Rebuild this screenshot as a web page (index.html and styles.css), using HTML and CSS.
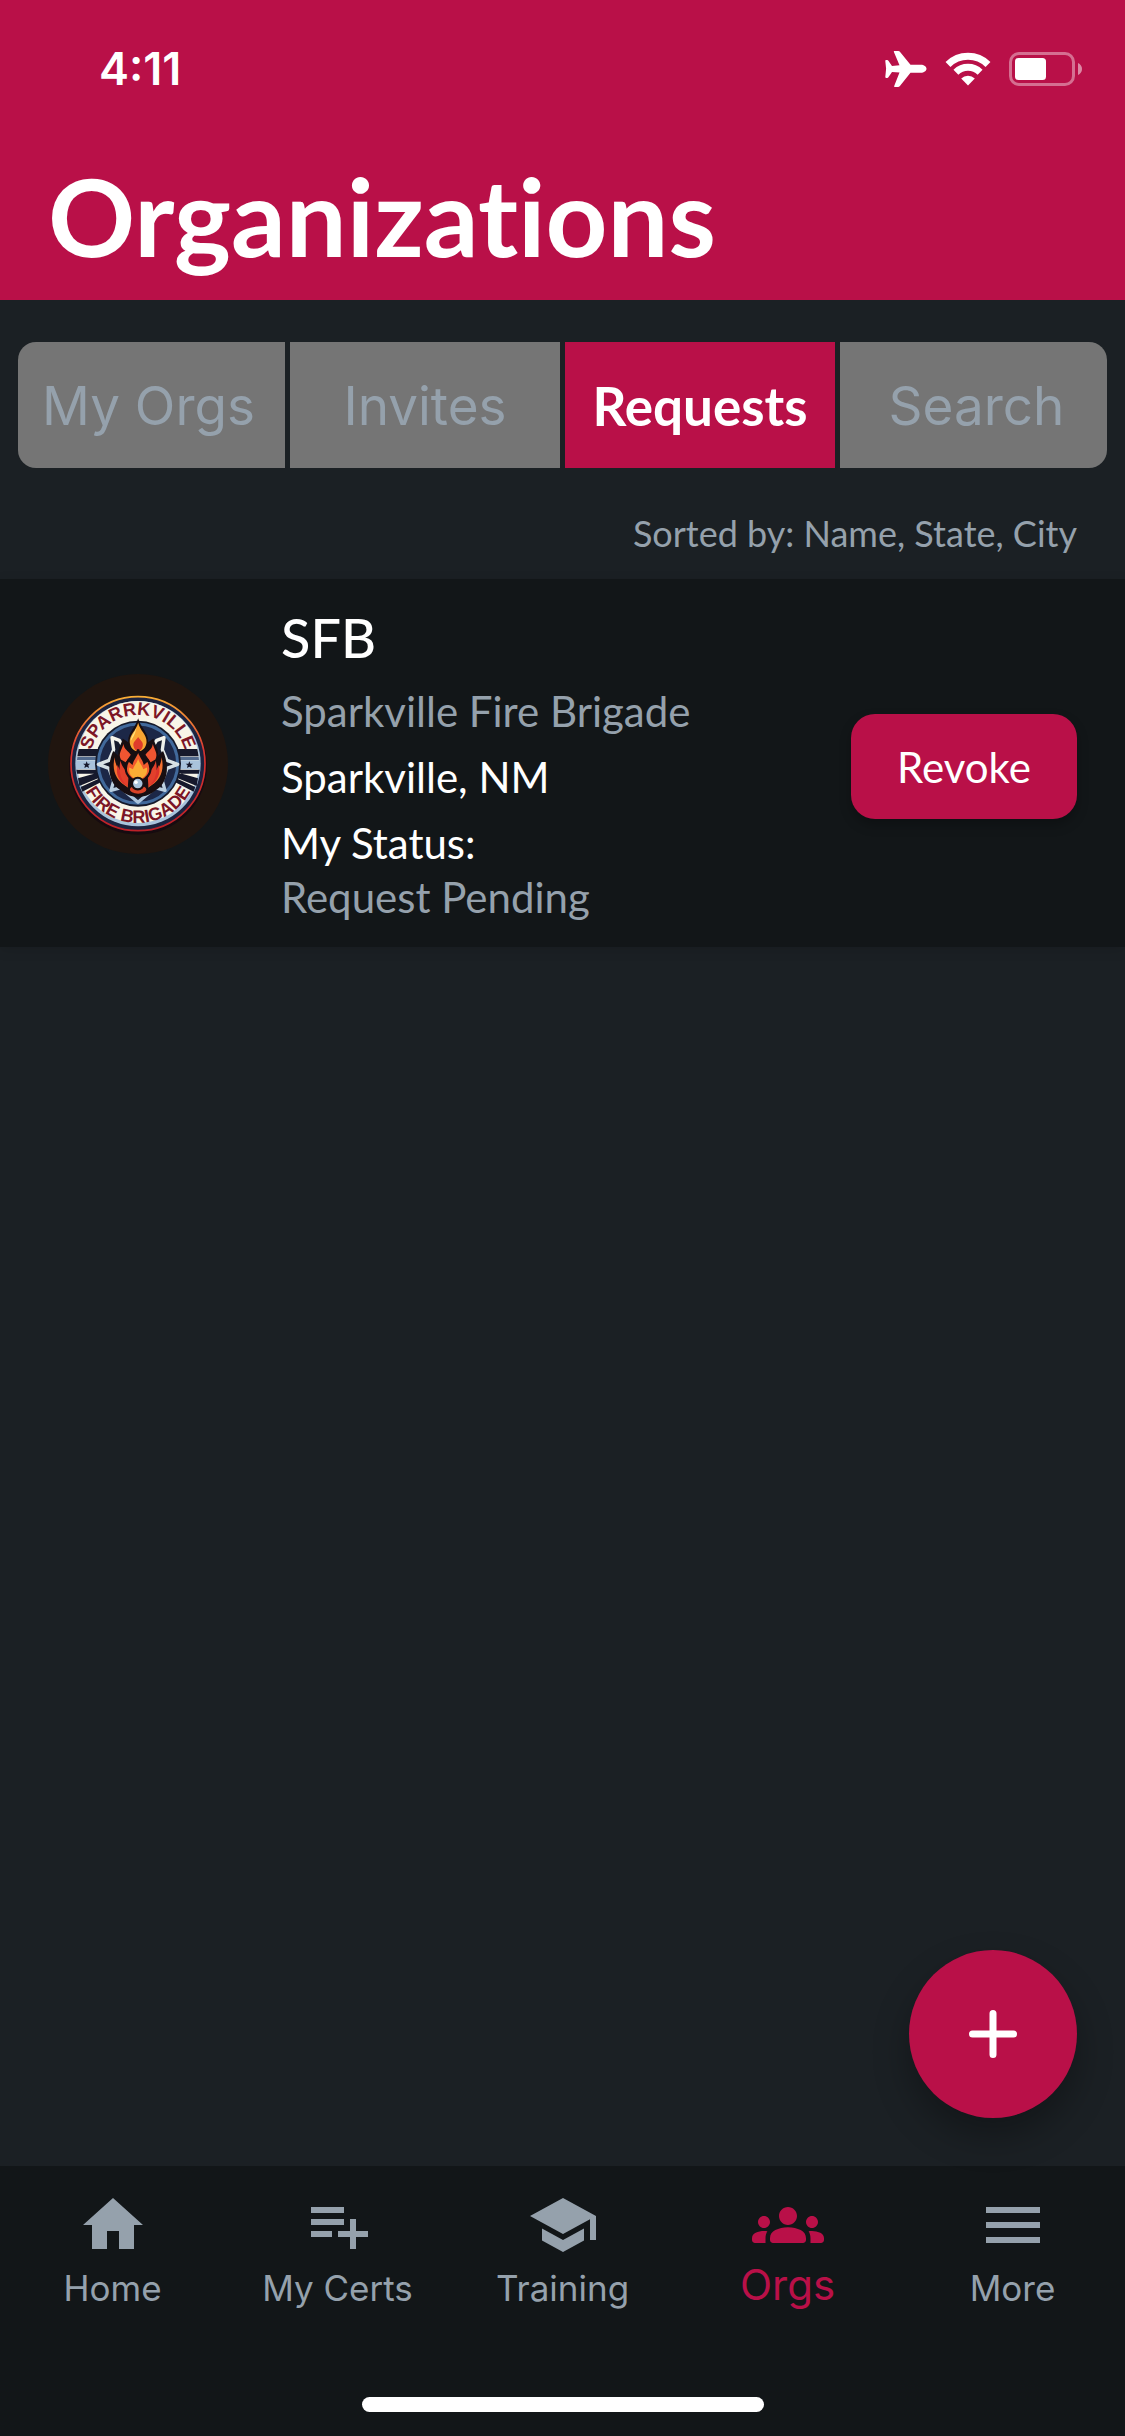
FILE: index.html
```html
<!DOCTYPE html>
<html lang="en">
<head>
<meta charset="utf-8">
<meta name="viewport" content="width=device-width, initial-scale=1">
<title>Organizations</title>
<link rel="stylesheet" href="styles.css">
</head>
<body>
<div class="app">
  <header class="header">
    <div class="status">
      <span class="status-time">4:11</span>
      <div class="status-icons">
        <svg width="42" height="38" viewBox="0 0 42 38" fill="#fff" aria-hidden="true"><path d="M9.500 1h3.800c.8 0 1.300.4 1.800 1.100L25.500 14.800h10.300c3.200 0 5.700 1.800 5.700 4s-2.500 4-5.700 4H25.500L15.100 35.800c-.5.700-1 1.200-1.800 1.200H9.800c-.5 0-.8-.5-.6-1l5.300-13.400-7.500-.7-3.600 5.300c-.3.500-.7.700-1.200.7H1c-.5 0-.7-.3-.7-.8l.8-8.300-.8-7.900c0-.5.200-.8.700-.8h1.200c.5 0 .9.200 1.200.7l3.600 5.200 7.500-.7L8.900 2c-.2-.500 0-1 .6-1z"/></svg>
        <svg width="46" height="34" viewBox="0 0 46 34" fill="none" stroke="#fff" stroke-width="7" aria-hidden="true"><path d="M3 12.500a28.500 28.500 0 0 1 40 0"/><path d="M10.900 20.300a17.300 17.300 0 0 1 24.200 0"/><path d="M23 33.500l-6.800-7a9.600 9.600 0 0 1 13.600 0z" fill="#fff" stroke="none"/></svg>
        <svg width="74" height="34" viewBox="0 0 74 34" aria-hidden="true"><rect x="1.500" y="1.500" width="63" height="31" rx="8.500" fill="none" stroke="#fff" stroke-opacity=".4" stroke-width="3"/><rect x="6" y="6" width="31" height="22" rx="3.500" fill="#fff"/><path d="M69 11c2.500 1 4 3.400 4 6s-1.500 5-4 6z" fill="#fff" fill-opacity=".5"/></svg>
      </div>
    </div>
    <h1 class="title">Organizations</h1>
  </header>

  <main class="content">
    <div class="tabs-wrap">
      <div class="tabs" role="tablist">
        <button class="tab" type="button" role="tab" aria-selected="false">My Orgs</button>
        <button class="tab" type="button" role="tab" aria-selected="false">Invites</button>
        <button class="tab tab-active" type="button" role="tab" aria-selected="true">Requests</button>
        <button class="tab" type="button" role="tab" aria-selected="false">Search</button>
      </div>
    </div>
    <p class="sort-note">Sorted by: Name, State, City</p>

    <article class="card">
      <svg class="avatar" viewBox="54 39 540 540" role="img" aria-label="Sparkville Fire Brigade logo">
        <defs>
          <linearGradient id="rim" x1="0" y1="0" x2="0" y2="1"><stop offset="0" stop-color="#f9ad35"/><stop offset=".18" stop-color="#ee7d35"/><stop offset=".4" stop-color="#d93531"/><stop offset="1" stop-color="#bd2028"/></linearGradient>
          <linearGradient id="steel" x1="0" y1="0" x2="0" y2="1"><stop offset="0" stop-color="#f6f5ec"/><stop offset="1" stop-color="#a9c3dc"/></linearGradient>
          <path id="arc-top" d="M178 308a146 146 0 0 1 292 0"/>
          <path id="arc-bottom" d="M146 308a178 178 0 0 0 356 0"/>
        </defs>
        <circle cx="324" cy="309" r="270" fill="#20150f"/>
        <circle cx="324" cy="314" r="207" fill="#160b10"/>
        <circle cx="324" cy="308" r="201" fill="#1c2340" stroke="url(#rim)" stroke-width="5"/>
        <circle cx="324" cy="308" r="188" fill="#a9c3dc"/>
        <circle cx="324" cy="303" r="183" fill="#f8f5e8"/>
        <g fill="#16192c">
          <path d="M146 264h62v22h-66zM440 264h62l4 22h-66zM139 326h66v12h-64zM443 326h66l-2 12h-64zM144 352l64-18v16l-60 25zM504 352l-64-18v16l60 25zM152 378l66-30v13l-61 31zM496 378l-66-30v13l61 31z"/>
        </g>
        <g fill="#a9c3dc"><path d="M140 298h64v27h-65zM444 298h64l1 27h-65z"/></g>
        <g fill="#526a8e"><path d="M142 287h62v10h-63zM444 287h62l1 10h-63z"/></g>
        <g fill="#16192c"><path d="M170 301l3 7h8l-6 5 2 8-7-4-7 4 2-8-6-5h8zM478 301l3 7h8l-6 5 2 8-7-4-7 4 2-8-6-5h8z"/></g>
        <circle cx="324" cy="308" r="129" fill="#15192a"/>
        <circle cx="324" cy="308" r="119" fill="#1c2747" stroke="#41699b" stroke-width="9"/>
        <path d="M246 230l22 8 14 22 84 0 14-22 22-8-5 36 14 32 32 12-32 12-14 38 8 28-30-8-18 16-33 28-33-28-18-16-30 8 8-28-14-38-32-12 32-12 14-32z" fill="#151a2c" stroke="url(#steel)" stroke-width="10" stroke-linejoin="round"/>
        <g transform="translate(-32 -26) scale(1.1)">
        <path d="M324 180c7 27 29 39 27 65l15-10c4 18 14 25 12 48l14-14c20 46 10 87-17 105-15 12-29 20-51 20s-36-8-51-20c-27-18-37-59-17-105l14 14c-2-23 8-30 12-48l15 10c-2-26 20-38 27-65z" fill="#180e11"/>
        <path d="M324 192c5 22 24 32 23 53-1 14-11 25-23 25s-22-11-23-25c-1-21 18-31 23-53z" fill="#f9a532"/>
        <path d="M324 231c6 10 16 13 12 27-2 7-7 11-12 11s-10-4-12-11c-4-14 6-17 12-27z" fill="#df3c2b"/>
        <path d="M320 202c-5 18-16 25-16 40 4-10 11-13 16-40z" fill="#ffe57d"/>
        <path d="M284 250c-5 18-15 26-7 42l13 8 14-21c-8-11-18-14-20-29zM364 250c5 18 15 26 7 42l-13 8-14-21c8-11 18-14 20-29z" fill="#ef5531"/>
        <path d="M260 286c-8 35 1 63 37 83-6-14-8-20-10-27-10-17-25-27-27-56zM388 286c8 35-1 63-37 83 6-14 8-20 10-27 10-17 25-27 27-56z" fill="#f4702f"/>
        <path d="M268 307c7 19 19 27 26 59-22-14-33-34-26-59zM380 307c-7 19-19 27-26 59 22-14 33-34 26-59z" fill="#dc322a"/>
        <path d="M276 296c4 18 14 24 22 40l-2 30c-16-14-28-38-20-70zM372 296c-4 18-14 24-22 40l2 30c16-14 28-38 20-70z" fill="#e2402b"/>
        <path d="M324 265c5 21 13 22 17 37l9-8c16 26 6 49-26 60-32-11-42-34-26-60l9 8c4-15 12-16 17-37z" fill="#f15a2d" stroke="#180e11" stroke-width="6"/>
        <path d="M324 290c5 16 12 19 14 29l10-5c3 22-9 29-24 34-15-5-27-12-24-34l10 5c2-10 9-13 14-29z" fill="#fbad35"/>
        <ellipse cx="324" cy="374" rx="25" ry="14" fill="#d94227" stroke="#180e11" stroke-width="5"/>
        <circle cx="323" cy="358" r="16" fill="#a9c3dc" stroke="#180e11" stroke-width="6"/>
        <circle cx="318" cy="354" r="5" fill="#fff"/>
        </g>
        <text class="seal-text"><textPath href="#arc-top" startOffset="50%">SPARRKVILLE</textPath></text>
        <text class="seal-text"><textPath href="#arc-bottom" startOffset="50%">FIRE BRIGADE</textPath></text>
      </svg>
      <div class="card-body">
        <h2 class="org-short">SFB</h2>
        <p class="line muted">Sparkville Fire Brigade</p>
        <p class="line">Sparkville, NM</p>
        <p class="status-line">My Status:<br><span class="muted">Request Pending</span></p>
      </div>
      <button class="revoke" type="button">Revoke</button>
    </article>

    <button class="fab" type="button" aria-label="Add organization">
      <svg width="48" height="48" viewBox="0 0 48 48" fill="none" stroke="#fff" stroke-width="7" stroke-linecap="round" aria-hidden="true"><path d="M24 3.500v41M3.500 24h41"/></svg>
    </button>
  </main>

  <footer class="footer">
    <nav class="nav">
      <a class="nav-item" href="#home"><svg class="nav-icon" viewBox="0 0 24 24" aria-hidden="true"><path d="M10 20v-6h4v6h5v-8h3L12 3 2 12h3v8z"/></svg><span class="nav-label">Home</span></a>
      <a class="nav-item" href="#certs"><svg class="nav-icon" viewBox="0 0 24 24" aria-hidden="true"><path d="M14 10H3v2h11v-2zm0-4H3v2h11V6zm4 8v-4h-2v4h-4v2h4v4h2v-4h4v-2h-4zM3 16h7v-2H3v2z"/></svg><span class="nav-label">My Certs</span></a>
      <a class="nav-item" href="#training"><svg class="nav-icon" viewBox="0 0 24 24" aria-hidden="true"><path d="M5 13.180v4L12 21l7-3.820v-4L12 17l-7-3.820zM12 3L1 9l11 6 9-4.910V17h2V9L12 3z"/></svg><span class="nav-label">Training</span></a>
      <a class="nav-item nav-active" href="#orgs" aria-current="page"><svg class="nav-icon" viewBox="0 0 24 24" aria-hidden="true"><path d="M12 12.750c1.630 0 3.070.39 4.240.9 1.080.48 1.760 1.560 1.760 2.730V17c0 .55-.45 1-1 1H7c-.55 0-1-.45-1-1v-.61c0-1.180.68-2.260 1.760-2.730 1.170-.52 2.610-.91 4.240-.91zM4 13c1.100 0 2-.9 2-2s-.9-2-2-2-2 .9-2 2 .9 2 2 2zm1.130 1.100C4.760 14.040 4.390 14 4 14c-.99 0-1.930.21-2.780.58A2.010 2.010 0 0 0 0 16.430V17c0 .55.45 1 1 1h3.500v-1.610c0-.83.23-1.610.63-2.290zM20 13c1.100 0 2-.9 2-2s-.9-2-2-2-2 .9-2 2 .9 2 2 2zm4 3.430c0-.81-.48-1.530-1.220-1.850A6.950 6.950 0 0 0 20 14c-.39 0-.76.04-1.130.1.4.68.63 1.460.63 2.290V18H23c.55 0 1-.45 1-1v-.57zM12 6c1.660 0 3 1.340 3 3s-1.340 3-3 3-3-1.340-3-3 1.340-3 3-3z"/></svg><span class="nav-label">Orgs</span></a>
      <a class="nav-item" href="#more"><svg class="nav-icon" viewBox="0 0 24 24" aria-hidden="true"><path d="M3 18h18v-2H3v2zm0-5h18v-2H3v2zm0-7v2h18V6H3z"/></svg><span class="nav-label">More</span></a>
    </nav>
    <div class="home-bar"></div>
  </footer>
</div>
</body>
</html>
```
FILE: styles.css
```css
:root {
  --brand: #b91048;
  --page: #1b2024;
  --panel: #121618;
  --muted: #95a1ac;
  --display: Lato, "Open Sans", sans-serif;
  --system: Inter, "Liberation Sans", sans-serif;
}

* { box-sizing: border-box; }

body {
  margin: 0;
  background: var(--page);
  color: #fff;
  font-family: var(--display);
  font-variant-ligatures: none;
}

h1, h2, p { margin: 0; }

button {
  border: 0;
  padding: 0;
  color: #fff;
  font-family: inherit;
}

.app {
  display: flex;
  flex-direction: column;
  min-height: 100vh;
}

.header {
  background: var(--brand);
  padding-bottom: 8px;
}

.status {
  display: flex;
  justify-content: space-between;
  align-items: center;
  height: 138px;
  padding: 0 42px 0 99px;
}

.status-time {
  font: 600 45px/54px var(--system);
}

.status-icons {
  display: flex;
  align-items: center;
  gap: 18px;
}

.title {
  padding: 0 48px;
  font-size: 108px;
  font-weight: 700;
  line-height: 154px;
}

.content {
  position: relative;
  flex: 1;
}

.tabs-wrap {
  padding: 36px 12px 0;
}

.tabs {
  display: grid;
  grid-template-columns: 267fr 270fr 270fr 267fr;
  gap: 5px;
  padding: 6px;
}

.tab {
  height: 126px;
  padding-top: 2px;
  background: #757575;
  color: var(--muted);
  font: 400 53px/64px var(--system);
}

.tab:first-child {
  padding-right: 6px;
  border-radius: 18px 0 0 18px;
}

.tab:last-child {
  padding-left: 6px;
  border-radius: 0 18px 18px 0;
}

.tab-active {
  background: var(--brand);
  color: #fff;
  font: 700 53px/64px var(--display);
}

.sort-note {
  padding: 36px 48px 23px;
  color: var(--muted);
  font-size: 36px;
  line-height: 46px;
  text-align: right;
}

.card {
  display: flex;
  align-items: center;
  padding: 25px 48px 23px;
  background: var(--panel);
  box-shadow: 0 3px 12px rgba(0, 0, 0, .12);
}

.avatar {
  flex: none;
  width: 180px;
  height: 180px;
}

.seal-text {
  fill: #7c1626;
  font: 700 54px "Liberation Sans", sans-serif;
  text-anchor: middle;
}

.card-body {
  flex: 1;
  padding-left: 53px;
}

.org-short {
  margin-bottom: 12px;
  font-family: "Lato Medium", Lato, sans-serif;
  font-size: 54px;
  font-weight: 500;
  line-height: 68px;
}

.line {
  margin-bottom: 12px;
  font-size: 42px;
  line-height: 54px;
}

.status-line {
  font-size: 42px;
  line-height: 54px;
}

.muted { color: var(--muted); }

.revoke {
  width: 226px;
  height: 105px;
  margin-top: 5px;
  border-radius: 24px;
  background: var(--brand);
  box-shadow: 0 6px 12px rgba(0, 0, 0, .25);
  font-size: 42px;
}

.fab {
  position: absolute;
  right: 48px;
  bottom: 48px;
  display: grid;
  place-items: center;
  width: 168px;
  height: 168px;
  border-radius: 50%;
  background: var(--brand);
  box-shadow: 0 18px 36px rgba(0, 0, 0, .3);
}

.footer {
  background: var(--panel);
  padding: 23px 0 24px;
}

.nav {
  display: grid;
  grid-template-columns: repeat(5, 1fr);
}

.nav-item {
  display: flex;
  flex-direction: column;
  align-items: center;
  color: var(--muted);
  text-decoration: none;
}

.nav-icon {
  width: 72px;
  height: 72px;
  fill: currentColor;
}

.nav-label {
  font: 400 35px/54px var(--system);
}

.nav-active { color: var(--brand); }
.nav-active .nav-label { font-size: 42px; line-height: 48px; }

.home-bar {
  width: 402px;
  height: 15px;
  margin: 82px auto 0;
  border-radius: 8px;
  background: #fff;
}
```
